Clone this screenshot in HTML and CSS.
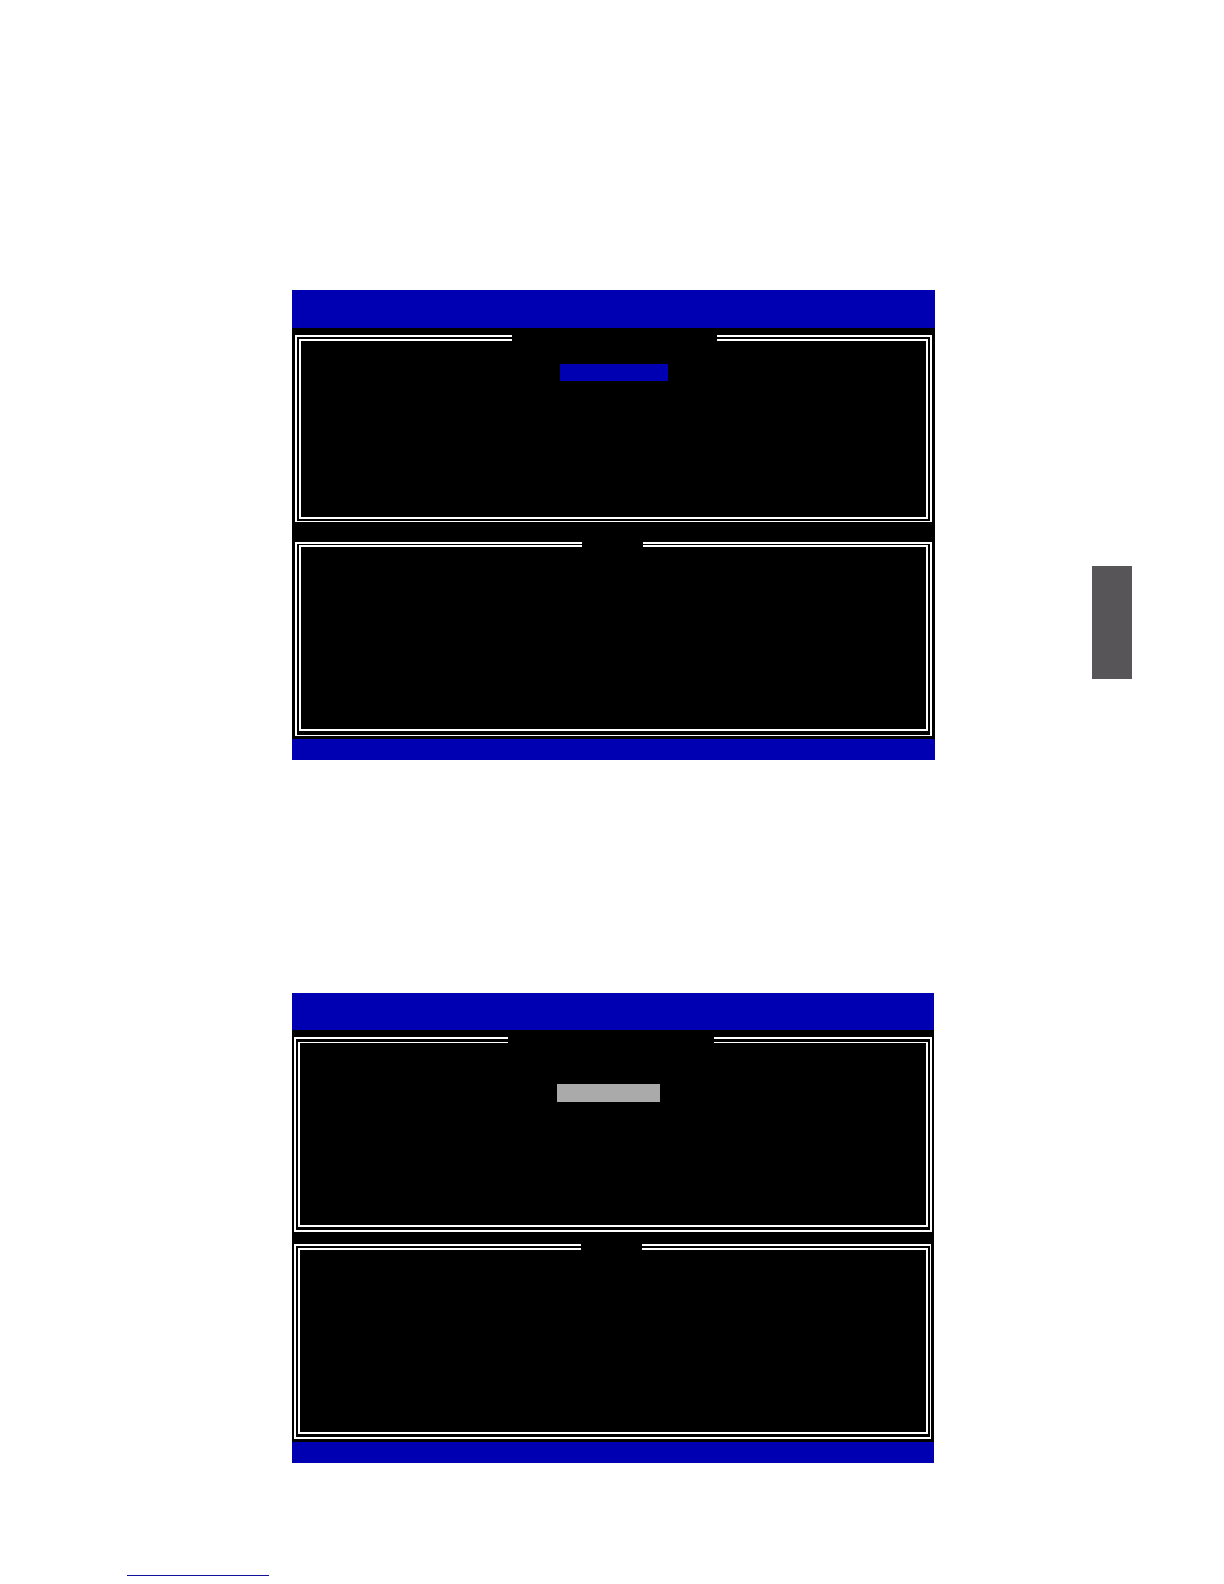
FILE: index.html
```
<!doctype html>
<html lang="en">
<head>
<meta charset="utf-8">
<link rel="stylesheet" href="styles.css">
</head>

<body>
<main class="page">
	<section class="screen screen-main">
		<header class="bar"></header>
		<div class="panel menu">
			<div class="inner">
				<div class="notch wide"></div>
				<button type="button" class="item"></button>
			</div>
		</div>
		<div class="panel list">
			<div class="inner">
				<div class="notch"></div>
			</div>
		</div>
		<footer class="bar bar-foot"></footer>
	</section>
	<aside class="tab"></aside>
	<section class="screen screen-sub">
		<header class="bar"></header>
		<div class="panel menu">
			<div class="inner">
				<div class="notch wide"></div>
				<button type="button" class="item"></button>
			</div>
		</div>
		<div class="panel list">
			<div class="inner">
				<div class="notch"></div>
			</div>
		</div>
		<footer class="bar bar-foot"></footer>
	</section>
	<a href="#" class="link"></a>
</main>
</body>
</html>
```
FILE: styles.css
```
*{margin:0; padding:0; box-sizing:border-box;}
body{background:#fff; font-family:"Liberation Sans",Arial,sans-serif;}
.page{display:grid; grid-template-columns:1fr minmax(0,643px) 1fr; padding:290px 0 8px 3px;}

/* console screens */
.screen{grid-column:2; background:#000; display:flex; flex-direction:column;}
.screen-main{grid-row:1;}
.screen-sub{grid-row:2; margin:233px 1px 0 0;}
.bar{height:38px; background:#0000b2;}
.bar-foot{height:21px; margin-top:3px;}

/* double line frames */
.panel{border:2px solid #fff; padding:2px; margin:7px 3px 0;}
.inner{border:2px solid #fff; height:186px;}
.notch{width:61px; height:6px; margin:-6px 0 0 281px; background:#000;}
.wide{width:205px; margin-left:211px;}
.item{display:block; width:108px; height:17px; margin:23px 0 0 259px; border:0; background:#0000b2;}

.screen-main .menu{border-bottom-width:1px;}
.screen-main .menu .inner{height:180px;}
.screen-main .list{border-bottom-width:1px; padding:1px 2px 4px; margin-top:20px;}

.screen-sub .bar{height:37px;}
.screen-sub .bar-foot{height:21px;}
.screen-sub .panel{margin:7px 2px 0; padding-bottom:3px;}
.screen-sub .menu{padding-top:3px;}
.screen-sub .menu .inner{border-top-width:1px; height:185px;}
.screen-sub .list{margin:12px 3px 0 2px; border-right-width:1px;}
.screen-sub .wide{width:206px; margin-left:208px;}
.screen-sub .item{width:103px; height:18px; margin:41px 0 0 257px; background:#aaa;}

/* chapter mark at the page edge */
.tab{grid-column:3; grid-row:1; justify-self:end; width:40px; height:113px; margin:276px 92px 0 0; background:#575558;}
.link{grid-column:1; grid-row:3; width:142px; height:1px; margin:112px 0 0 124px; background:#10109a;}
```
